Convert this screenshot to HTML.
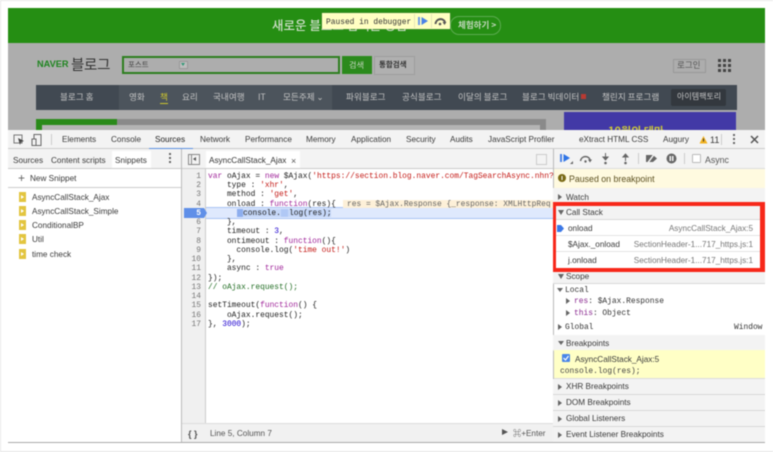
<!DOCTYPE html>
<html><head><meta charset="utf-8"><style>
html,body{margin:0;padding:0;background:#fff}
#r{position:relative;width:773px;height:452px;overflow:hidden;background:#fff;font-family:"Liberation Sans","Noto Sans CJK KR",sans-serif;filter:blur(.45px)}
#r div,#r svg{position:absolute}
.t{white-space:pre;line-height:12px;font-size:8.2px;color:#3a3a3a;margin-top:1px}
.k{white-space:pre;line-height:12px;font-size:8.6px;color:#c4c4c4;font-family:"Noto Sans CJK KR","NanumGothic",sans-serif}
.m{white-space:pre;line-height:10px;font-size:7.9px;color:#222;font-family:"Liberation Mono",monospace;margin-top:1px}
.n{width:20px;left:181px;text-align:right;white-space:pre;line-height:10px;font-size:7.9px;color:#777;font-family:"Liberation Mono",monospace;margin-top:1px}
.kw{color:#a0269a}.st{color:#c41a16}.nu{color:#1c00cf}.co{color:#236e25}
.tri{width:0;height:0;border-left:5px solid #666;border-top:3px solid transparent;border-bottom:3px solid transparent}
.trd{width:0;height:0;border-top:5px solid #666;border-left:3px solid transparent;border-right:3px solid transparent}
.f{width:7px;height:10px;background:#e3c53f}
.f:after{content:"";position:absolute;left:2px;top:3px;border-left:3px solid #fff;border-top:2px solid transparent;border-bottom:2px solid transparent}
.h{height:1px;background:#d4d4d4}
.sec{left:553px;width:212px;height:15px;background:#f3f3f3;border-bottom:1px solid #d8d8d8}
</style></head><body><div id="r">
<div style="left:0;top:0;width:1px;height:452px;background:#e8e8e8"></div>
<div style="left:0;top:0;width:773px;height:1px;background:#e8e8e8"></div>
<div style="left:0;top:451px;width:773px;height:1px;background:#e4e4e4"></div>

<!-- page -->
<div style="left:8px;top:8px;width:757px;height:122px;background:#adadad"></div>
<div style="left:8px;top:8px;width:757px;height:35px;background:#258e13"></div>
<div style="left:272px;top:14px;width:178px;height:22px;overflow:hidden"><div class="k" style="left:0;top:2px;font-size:12.500px;line-height:18px;color:#cfdfca;font-weight:500">새로운 블로그 검색을 경험</div></div>
<div style="left:450px;top:16px;width:49px;height:17px;border:1px solid #5cab50;border-radius:9px"></div>
<div class="k" style="left:458px;top:19px;color:#c4d8bf;font-size:8.500px;font-weight:700">체험하기 &gt;</div>
<div style="left:322px;top:13px;width:128px;height:16px;background:#ffffc2;box-shadow:0 0 1px #888"></div>
<div class="m" style="left:326px;top:17px;color:#333">Paused in debugger</div>
<div style="left:414px;top:14px;width:1px;height:14px;background:#e6e6b8"></div>
<div style="left:431px;top:14px;width:1px;height:14px;background:#e6e6b8"></div>
<svg style="left:418px;top:17px" width="10" height="9"><rect x="0" y="0" width="2" height="8" fill="#6d9be8"/><path d="M3.500 0L10 4 3.500 8z" fill="#4a83e6"/></svg>
<svg style="left:434px;top:17px" width="13" height="9"><path d="M1.500 7A5 5 0 0 1 11 5" fill="none" stroke="#555" stroke-width="2"/><path d="M8.500 5h4L10.500 8z" fill="#555"/><circle cx="6" cy="7" r="1.300" fill="#555"/></svg>

<div style="left:37px;top:59px;font-size:9.200px;line-height:11px;font-weight:700;color:#1f8520;font-family:'Liberation Sans',sans-serif;white-space:pre">NAVER</div>
<div class="k" style="left:71px;top:54px;font-size:14.500px;line-height:22px;color:#333;letter-spacing:-.3px">블로그</div>
<div style="left:122px;top:56px;width:214px;height:14px;border:2px solid #2d7f1f;background:#adadad"></div>
<div class="k" style="left:128px;top:59px;color:#444;font-size:7.500px">포스트</div>
<div style="left:179px;top:61px;width:7px;height:6px;background:#bdbdbd;border:1px solid #999"></div>
<div style="left:181px;top:63px;border-top:3px solid #397;border-left:2px solid transparent;border-right:2px solid transparent"></div>
<div style="left:342px;top:56px;width:30px;height:18px;background:#2b8a1c"></div>
<div class="k" style="left:349px;top:59px;color:#c7d7c2;font-size:8.200px">검색</div>
<div style="left:374px;top:56px;width:39px;height:17px;border:1px solid #9d9d9d;background:#b0b0b0"></div>
<div class="k" style="left:379px;top:59px;color:#333;font-size:7.500px;font-weight:700">통합검색</div>
<div style="left:673px;top:59px;width:31px;height:12px;border:1px solid #999"></div>
<div class="k" style="left:677px;top:59px;color:#555;font-size:8.500px">로그인</div>
<svg style="left:718px;top:59px" width="13" height="13"><g fill="#444"><rect width="3" height="3"/><rect x="5" width="3" height="3"/><rect x="10" width="3" height="3"/><rect y="5" width="3" height="3"/><rect x="5" y="5" width="3" height="3"/><rect x="10" y="5" width="3" height="3"/><rect y="10" width="3" height="3"/><rect x="5" y="10" width="3" height="3"/><rect x="10" y="10" width="3" height="3"/></g></svg>

<div style="left:36px;top:85px;width:701px;height:25px;background:#414952"></div>
<div style="left:119px;top:85px;width:213px;height:25px;background:#4c545c"></div>
<div class="k" style="left:60px;top:91px">블로그 홈</div>
<div class="k" style="left:129px;top:91px">영화</div>
<div class="k" style="left:160px;top:91px;color:#cdc52e;border-bottom:1px solid #cdc52e">책</div>
<div class="k" style="left:182px;top:91px">요리</div>
<div class="k" style="left:213px;top:91px">국내여행</div>
<div class="k" style="left:258px;top:91px">IT</div>
<div class="k" style="left:283px;top:91px">모든주제 ⌄</div>
<div class="k" style="left:346px;top:91px">파워블로그</div>
<div class="k" style="left:402px;top:91px">공식블로그</div>
<div class="k" style="left:458px;top:91px">이달의 블로그</div>
<div class="k" style="left:522px;top:91px">블로그 빅데이터</div>
<div style="left:581px;top:94px;width:5px;height:5px;background:#b83a32"></div>
<div class="k" style="left:602px;top:91px">챌린지 프로그램</div>
<div style="left:671px;top:89px;width:55px;height:17px;background:#33383e;border-radius:2px"></div>
<div class="k" style="left:677px;top:91px;font-size:8px;color:#c8c8c8">아이템팩토리</div>

<div style="left:36px;top:119px;width:510px;height:11px;background:#8a8a8a"></div>
<div style="left:36px;top:119px;width:81px;height:6px;background:#2a8a1a"></div>
<div style="left:36px;top:125px;width:6px;height:5px;background:#2a8a1a"></div>
<div style="left:42px;top:125px;width:498px;height:5px;background:#b4b4b4"></div>
<div style="left:564px;top:112px;width:172px;height:18px;background:#4239a6"></div>
<div class="k" style="left:608px;top:125px;color:#c9c53a;font-size:11px;font-weight:700">10월의 테마</div>

<!-- devtools -->
<div style="left:8px;top:130px;width:757px;height:312px;background:#fff"></div>
<div style="left:8px;top:130px;width:757px;height:18px;background:#f3f3f3;border-bottom:1px solid #ccc"></div>
<svg style="left:13px;top:134px" width="30" height="13"><rect x="1" y="1" width="8" height="8" fill="none" stroke="#777"/><path d="M5 4l6 3-3 1-1 3z" fill="#444"/><rect x="21" y="0.500" width="7" height="11" fill="none" stroke="#666"/><rect x="19" y="5" width="4" height="6.500" fill="#f3f3f3" stroke="#666"/></svg>
<div style="left:51px;top:134px;width:1px;height:11px;background:#ccc"></div>
<div class="t" style="left:62px;top:133px">Elements</div>
<div class="t" style="left:111px;top:133px">Console</div>
<div class="t" style="left:155px;top:133px;color:#222">Sources</div>
<div class="t" style="left:200px;top:133px">Network</div>
<div class="t" style="left:245px;top:133px">Performance</div>
<div class="t" style="left:306px;top:133px">Memory</div>
<div class="t" style="left:351px;top:133px">Application</div>
<div class="t" style="left:406px;top:133px">Security</div>
<div class="t" style="left:450px;top:133px">Audits</div>
<div class="t" style="left:488px;top:133px">JavaScript Profiler</div>
<div class="t" style="left:579px;top:133px">eXtract HTML CSS</div>
<div class="t" style="left:663px;top:133px">Augury</div>
<svg style="left:699px;top:135px" width="9" height="9"><path d="M4.500 1L8.500 8.500H.5z" fill="#f2b21f"/><rect x="4" y="3.500" width="1" height="3" fill="#333"/></svg>
<div class="t" style="left:710px;top:133px;font-size:9px">11</div>
<div style="left:721px;top:134px;width:1px;height:11px;background:#ccc"></div>
<svg style="left:733px;top:134px" width="3" height="11"><g fill="#666"><rect y="0" width="2" height="2"/><rect y="4" width="2" height="2"/><rect y="8" width="2" height="2"/></g></svg>
<svg style="left:750px;top:135px" width="9" height="9"><path d="M1 1L8 8M8 1L1 8" stroke="#555" stroke-width="1.500"/></svg>
<div style="left:149px;top:148px;width:44px;height:1px;background:#5b8fe0"></div>

<!-- left panel -->
<div style="left:8px;top:149px;width:173px;height:19px;background:#f3f3f3;border-bottom:1px solid #ccc"></div>
<div style="left:112px;top:151px;width:39px;height:17px;background:#fff"></div>
<div class="t" style="left:13px;top:154px">Sources</div>
<div class="t" style="left:51px;top:154px">Content scripts</div>
<div class="t" style="left:115px;top:154px">Snippets</div>
<svg style="left:169px;top:153px" width="3" height="11"><g fill="#666"><rect y="0" width="2" height="2"/><rect y="4" width="2" height="2"/><rect y="8" width="2" height="2"/></g></svg>
<div class="t" style="left:18px;top:171px;font-size:12px;color:#666">+</div>
<div class="t" style="left:30px;top:172px">New Snippet</div>
<div class="h" style="left:8px;top:187px;width:173px;background:#ccc"></div>
<div class="f" style="left:19px;top:192px"></div><div class="t" style="left:32px;top:191px">AsyncCallStack_Ajax</div>
<div class="f" style="left:19px;top:206px"></div><div class="t" style="left:32px;top:205px">AsyncCallStack_Simple</div>
<div class="f" style="left:19px;top:220px"></div><div class="t" style="left:32px;top:219px">ConditionalBP</div>
<div class="f" style="left:19px;top:234px"></div><div class="t" style="left:32px;top:233px">Util</div>
<div class="f" style="left:19px;top:249px"></div><div class="t" style="left:32px;top:248px">time check</div>
<div style="left:181px;top:149px;width:1px;height:293px;background:#bbb"></div>

<!-- editor -->
<div style="left:182px;top:149px;width:371px;height:19px;background:#f3f3f3;border-bottom:1px solid #ccc"></div>
<div style="left:188px;top:154px;width:10px;height:9px;border:1px solid #888"></div>
<div style="left:191px;top:155px;width:1px;height:9px;background:#888"></div>
<div style="left:193px;top:157px;border-right:3px solid #555;border-top:2px solid transparent;border-bottom:2px solid transparent"></div>
<div style="left:206px;top:151px;width:94px;height:17px;background:#fff"></div>
<div class="t" style="left:209px;top:154px;color:#333">AsyncCallStack_Ajax</div>
<div class="t" style="left:291px;top:154px;color:#555;font-size:9px">×</div>
<div style="left:536px;top:154px;width:9px;height:9px;border:1px solid #ccc"></div>
<div style="left:182px;top:169px;width:23px;height:254px;background:#f0f0f0;border-right:1px solid #ccc"></div>
<div style="left:206px;top:208px;width:347px;height:10px;background:#dfe9fd"></div>
<div style="left:206px;top:207px;width:347px;height:1px;background:#a9c3f3"></div>
<div style="left:206px;top:218px;width:347px;height:1px;background:#a9c3f3"></div>
<div style="left:343px;top:200px;width:210px;height:8px;background:#fdf0d8"></div>
<svg style="left:184px;top:208px" width="24" height="10"><path d="M0 0H20L23 5 20 10H0z" fill="#5f8fe8"/></svg>
<div style="left:243px;top:209px;width:88px;height:8px;background:#c5d7f8"></div>
<div style="left:237px;top:209px;width:6px;height:8px;background:#8daeee"></div>
<div style="left:281px;top:209px;width:7px;height:8px;background:#b0c8f5"></div>

<div class="n" style="top:171px">1</div><div class="n" style="top:180px">2</div><div class="n" style="top:189px">3</div><div class="n" style="top:199px">4</div>
<div class="n" style="top:208px;color:#fff;font-weight:700">5</div><div class="n" style="top:217px">6</div><div class="n" style="top:226px">7</div><div class="n" style="top:236px">8</div><div class="n" style="top:245px">9</div><div class="n" style="top:254px">10</div><div class="n" style="top:263px">11</div><div class="n" style="top:273px">12</div><div class="n" style="top:282px">13</div><div class="n" style="top:291px">14</div><div class="n" style="top:300px">15</div><div class="n" style="top:310px">16</div><div class="n" style="top:319px">17</div>
<div style="left:208px;top:171px;width:345px;height:12px;overflow:hidden"><div class="m" style="left:0;top:0"><span class="kw">var</span> oAjax = <span class="kw">new</span> $Ajax(<span class="st">'https://section.blog.naver.com/TagSearchAsync.nhn?</span></div></div>
<div class="m" style="left:208px;top:180px">    type : <span class="st">'xhr'</span>,</div>
<div class="m" style="left:208px;top:189px">    method : <span class="st">'get'</span>,</div>
<div class="m" style="left:208px;top:199px">    onload : <span class="kw">function</span>(res){</div>
<div style="left:347px;top:199px;width:206px;height:12px;overflow:hidden"><div class="m" style="left:0;top:0;color:#666">res = $Ajax.Response {_response: XMLHttpReq</div></div>
<div class="m" style="left:243px;top:208px">console.</div>
<div class="m" style="left:289px;top:208px">log(res);</div>
<div class="m" style="left:208px;top:217px">    },</div>
<div class="m" style="left:208px;top:226px">    timeout : <span class="nu">3</span>,</div>
<div class="m" style="left:208px;top:236px">    ontimeout : <span class="kw">function</span>(){</div>
<div class="m" style="left:208px;top:245px">      console.log(<span class="st">'time out!'</span>)</div>
<div class="m" style="left:208px;top:254px">    },</div>
<div class="m" style="left:208px;top:263px">    async : <span class="kw">true</span></div>
<div class="m" style="left:208px;top:273px">});</div>
<div class="m co" style="left:208px;top:282px">// oAjax.request();</div>
<div class="m" style="left:208px;top:300px">setTimeout(<span class="kw">function</span>() {</div>
<div class="m" style="left:208px;top:310px">    oAjax.request();</div>
<div class="m" style="left:208px;top:319px">}, <span class="nu">3000</span>);</div>

<!-- status -->
<div style="left:182px;top:423px;width:371px;height:19px;background:#f1f1f1;border-top:1px solid #ddd;box-sizing:border-box"></div>
<div class="t" style="left:188px;top:427px;font-weight:700;color:#555;font-size:9px">{ }</div>
<div class="t" style="left:210px;top:427px;color:#555">Line 5, Column 7</div>
<div class="tri" style="left:502px;top:429px;border-left:6px solid #555;border-top-width:3.500px;border-bottom-width:3.500px"></div>
<div class="t" style="left:513px;top:427px;color:#555">⌘+Enter</div>
<div style="left:8px;top:442px;width:757px;height:1px;background:#aaa"></div>

<!-- right panel -->
<div style="left:553px;top:149px;width:1px;height:293px;background:#bbb"></div>
<div style="left:554px;top:149px;width:211px;height:19px;background:#f3f3f3"></div>
<svg style="left:560px;top:153px" width="14" height="12"><rect x="0" y="1" width="2" height="8" fill="#4d86e8"/><path d="M3.500 1L10 5 3.500 9z" fill="#2f74e6"/><path d="M10 11h3V8z" fill="#666"/></svg>
<svg style="left:579px;top:154px" width="14" height="10"><path d="M1.500 7A5 5 0 0 1 11 5.500" fill="none" stroke="#666" stroke-width="1.500"/><path d="M9 5.500h4L11 8.500z" fill="#666"/><circle cx="6.500" cy="7.500" r="1.200" fill="#666"/></svg>
<svg style="left:602px;top:153px" width="7" height="12"><path d="M3.500 0v5M1 4l2.500 3L6 4z" stroke="#666" fill="#666"/><circle cx="3.500" cy="10" r="1.300" fill="#666"/></svg>
<svg style="left:622px;top:153px" width="7" height="12"><path d="M3.500 8V3M1 4l2.500-3L6 4z" stroke="#666" fill="#666"/><circle cx="3.500" cy="10" r="1.300" fill="#666"/></svg>
<div style="left:638px;top:153px;width:1px;height:11px;background:#ccc"></div>
<svg style="left:645px;top:153px" width="14" height="11"><path d="M1 2h7l4 3.500L8 9H1z" fill="#666"/><path d="M2 11L10 0" stroke="#f3f3f3" stroke-width="1.500"/></svg>
<svg style="left:666px;top:153px" width="11" height="11"><circle cx="5.500" cy="5.500" r="5" fill="#666"/><rect x="3.500" y="3" width="1.500" height="5" fill="#f3f3f3"/><rect x="6" y="3" width="1.500" height="5" fill="#f3f3f3"/></svg>
<div style="left:684px;top:153px;width:1px;height:11px;background:#ccc"></div>
<div style="left:692px;top:154px;width:7px;height:7px;border:1px solid #bbb;background:#fff;border-radius:1px"></div>
<div class="t" style="left:705px;top:153px;color:#555;font-size:8.800px">Async</div>
<div style="left:554px;top:168px;width:211px;height:20px;background:#fffae0;border-top:1px solid #ddd"></div>
<svg style="left:558px;top:174px" width="8" height="8"><circle cx="4" cy="4" r="4" fill="#7a6a14"/><rect x="3.500" y="2" width="1" height="4" fill="#fff"/></svg>
<div class="t" style="left:569px;top:172px;color:#5c5020;font-size:8.800px">Paused on breakpoint</div>
<div class="sec" style="top:188px;height:14px"></div>
<div class="tri" style="left:558px;top:194px;border-left-width:4px"></div>
<div class="t" style="left:566px;top:191px">Watch</div>

<div class="sec" style="top:206px;height:13px"></div>
<div class="trd" style="left:558px;top:210px"></div>
<div class="t" style="left:566px;top:206px">Call Stack</div>
<svg style="left:557px;top:225px" width="7" height="7"><path d="M0 0H4L7 3.500 4 7H0z" fill="#3c78e6"/></svg>
<div class="t" style="left:568px;top:222px">onload</div>
<div class="t" style="right:20px;top:222px;color:#777">AsyncCallStack_Ajax:5</div>
<div class="h" style="left:554px;top:235px;width:206px;background:#e4e4e4"></div>
<div class="t" style="left:568px;top:238px">$Ajax._onload</div>
<div class="t" style="right:20px;top:238px;color:#777">SectionHeader-1...717_https.js:1</div>
<div class="h" style="left:554px;top:251px;width:206px;background:#e4e4e4"></div>
<div class="t" style="left:568px;top:254px">j.onload</div>
<div class="t" style="right:20px;top:254px;color:#777">SectionHeader-1...717_https.js:1</div>

<div class="sec" style="top:272px;height:11px"></div>
<div class="trd" style="left:558px;top:274px"></div>
<div class="t" style="left:566px;top:270px">Scope</div>
<div class="trd" style="left:557px;top:288px;border-top-width:4px"></div>
<div class="m" style="left:565px;top:285px;color:#333">Local</div>
<div class="tri" style="left:566px;top:298px;border-left-width:4px"></div>
<div class="m" style="left:574px;top:296px;color:#333"><span style="color:#8a2a90">res</span>: $Ajax.Response</div>
<div class="tri" style="left:566px;top:310px;border-left-width:4px"></div>
<div class="m" style="left:574px;top:308px;color:#333"><span style="color:#8a2a90">this</span>: Object</div>
<div class="tri" style="left:558px;top:324px;border-left-width:4px"></div>
<div class="m" style="left:565px;top:322px;color:#333">Global</div>
<div class="m" style="left:734px;top:322px;color:#333">Window</div>

<div class="sec" style="top:335px"></div>
<div class="trd" style="left:558px;top:341px;border-top-width:4px"></div>
<div class="t" style="left:566px;top:337px">Breakpoints</div>
<div style="left:554px;top:350px;width:211px;height:28px;background:#ffffc6;border-bottom:1px solid #ddd"></div>
<div style="left:562px;top:354px;width:8px;height:8px;background:#4a86e8;border-radius:1px"></div>
<svg style="left:562px;top:354px" width="8" height="8"><path d="M1.500 4l2 2 3-4" fill="none" stroke="#fff" stroke-width="1.200"/></svg>
<div class="t" style="left:575px;top:353px">AsyncCallStack_Ajax:5</div>
<div class="m" style="left:560px;top:366px;color:#444">console.log(res);</div>

<div class="sec" style="top:379px"></div>
<div class="tri" style="left:558px;top:384px;border-left-width:4px"></div>
<div class="t" style="left:566px;top:380px">XHR Breakpoints</div>
<div class="sec" style="top:395px"></div>
<div class="tri" style="left:558px;top:400px;border-left-width:4px"></div>
<div class="t" style="left:566px;top:396px">DOM Breakpoints</div>
<div class="sec" style="top:411px"></div>
<div class="tri" style="left:558px;top:416px;border-left-width:4px"></div>
<div class="t" style="left:566px;top:412px">Global Listeners</div>
<div class="sec" style="top:427px"></div>
<div class="tri" style="left:558px;top:432px;border-left-width:4px"></div>
<div class="t" style="left:566px;top:428px">Event Listener Breakpoints</div>

<div style="left:553px;top:202px;width:212px;height:70px;box-sizing:border-box;border:solid #f7281a;border-width:4px 5px 4px 3px"></div>
<div style="left:553px;top:442px;width:212px;height:1px;background:#aaa"></div>
</div></body></html>
